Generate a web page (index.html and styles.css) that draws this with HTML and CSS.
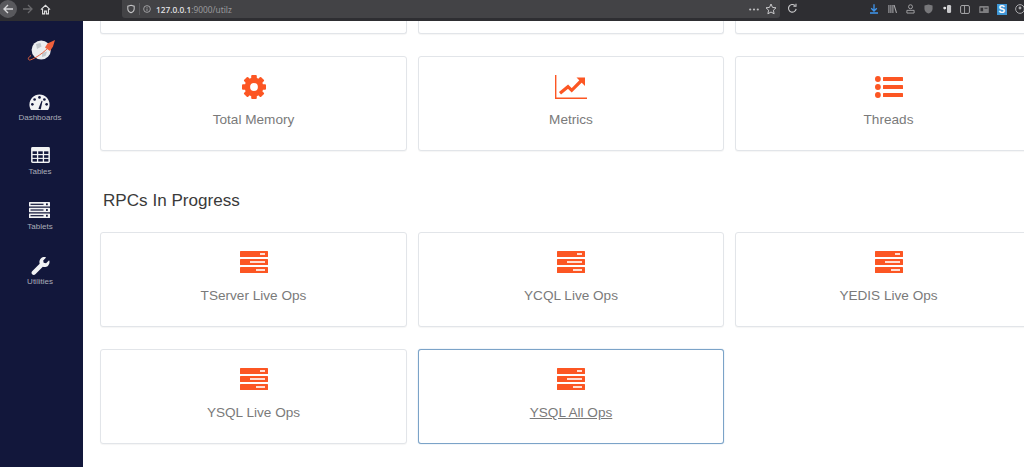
FILE: index.html
```html
<!DOCTYPE html>
<html lang="en">
<head>
    <meta charset="UTF-8">
    <meta name="viewport" content="width=device-width, initial-scale=1.0">
    <title>Utilities</title>
    <link rel="stylesheet" href="styles.css">
</head>
<body>
    <svg class="icon-defs" aria-hidden="true">
        <symbol id="i-server" viewBox="0 0 28 24">
            <rect y="0" width="28" height="6" rx="0.5" fill="currentColor"/>
            <rect y="8" width="28" height="6" rx="0.5" fill="currentColor"/>
            <rect y="16" width="28" height="6" rx="0.5" fill="currentColor"/>
            <rect x="20" y="2.2" width="5" height="1.6" fill="#fff"/>
            <rect x="10" y="10.2" width="15" height="1.6" fill="#fff"/>
            <rect x="16" y="18.2" width="9" height="1.6" fill="#fff"/>
        </symbol>
        <symbol id="i-gear" viewBox="0 0 24 24">
            <g fill="currentColor">
                <rect x="9.2" y="0" width="5.6" height="24" rx="1"/>
                <rect x="9.2" y="0" width="5.6" height="24" rx="1" transform="rotate(45 12 12)"/>
                <rect x="9.2" y="0" width="5.6" height="24" rx="1" transform="rotate(90 12 12)"/>
                <rect x="9.2" y="0" width="5.6" height="24" rx="1" transform="rotate(135 12 12)"/>
                <circle cx="12" cy="12" r="9.4"/>
            </g>
            <circle cx="12" cy="12" r="3.9" fill="#fff"/>
        </symbol>
        <symbol id="i-chart" viewBox="0 0 32 24">
            <path d="M0.7 0V23.3H32" fill="none" stroke="currentColor" stroke-width="1.4"/>
            <path d="M5 18.3L13 11.7L16.7 15.3L26 6" fill="none" stroke="currentColor" stroke-width="3.2"/>
            <path d="M21.5 2.5H30V11Z" fill="currentColor"/>
        </symbol>
        <symbol id="i-list" viewBox="0 0 28 24">
            <g fill="currentColor">
                <circle cx="2.9" cy="4" r="2.9"/>
                <circle cx="2.9" cy="12" r="2.9"/>
                <circle cx="2.9" cy="20" r="2.9"/>
                <rect x="8" y="2" width="20" height="4" rx="0.5"/>
                <rect x="8" y="10" width="20" height="4" rx="0.5"/>
                <rect x="8" y="18" width="20" height="4" rx="0.5"/>
            </g>
        </symbol>
    </svg>

    <div class="toolbar">
        <div class="nav-btns">
            <span class="back-btn">
                <svg width="12" height="12" viewBox="0 0 12 12"><path d="M11 6H2M6 2L2 6L6 10" fill="none" stroke="#d8d8da" stroke-width="1.4"/></svg>
            </span>
            <svg class="fwd-btn" width="12" height="12" viewBox="0 0 12 12"><path d="M1 6H10M6 2L10 6L6 10" fill="none" stroke="#69696c" stroke-width="1.3"/></svg>
            <svg class="home-btn" width="11" height="11" viewBox="0 0 12 12"><path d="M1 6.2L6 1.5L11 6.2M2.8 5.5V10.8H5V7.8H7V10.8H9.2V5.5" fill="none" stroke="#e0e0e2" stroke-width="1.2"/></svg>
        </div>
        <div class="urlbar">
            <svg width="8" height="10" viewBox="0 0 10 11"><path d="M5 .8L9 2V5.5C9 8 7 9.5 5 10.3C3 9.5 1 8 1 5.5V2Z" fill="none" stroke="#c4c4c6" stroke-width="1.3"/></svg>
            <span class="url-sep"></span>
            <svg width="8" height="8" viewBox="0 0 10 10"><circle cx="5" cy="5" r="4.2" fill="none" stroke="#b5b5b7"/><path d="M5 4.4V7.4M5 2.5V3.5" stroke="#b5b5b7"/></svg>
            <span class="url-text"><b>127.0.0.1</b>:9000/utilz</span>
            <svg class="url-dots" width="10" height="3" viewBox="0 0 10 3"><circle cx="1.2" cy="1.5" r="1.1" fill="#bdbdbf"/><circle cx="5" cy="1.5" r="1.1" fill="#bdbdbf"/><circle cx="8.8" cy="1.5" r="1.1" fill="#bdbdbf"/></svg>
            <svg width="12" height="12" viewBox="0 0 12 12"><path d="M6 1L7.5 4.4L11 4.8L8.4 7.2L9.1 10.8L6 9L2.9 10.8L3.6 7.2L1 4.8L4.5 4.4Z" fill="none" stroke="#c9c9cb"/></svg>
        </div>
        <svg class="reload-btn" width="11" height="11" viewBox="0 0 12 12"><path d="M10 6.5A4.2 4.2 0 1 1 8.6 2.6M9.8 .8V3.6H7" fill="none" stroke="#c9c9cb" stroke-width="1.2"/></svg>
        <div class="tool-icons">
            <svg width="8" height="10" viewBox="0 0 10 12"><path d="M5 0V8M1.5 5L5 8.5L8.5 5M0 11H10" fill="none" stroke="#3f96ee" stroke-width="1.6"/></svg>
            <svg width="9" height="8" viewBox="0 0 11 10"><path d="M1 0V10M3.5 0V10M6 0V10M7.5 0L10.5 10" fill="none" stroke="#a9a9ac" stroke-width="1.3"/></svg>
            <svg width="9" height="10" viewBox="0 0 10 11"><circle cx="5" cy="3" r="2.2" fill="none" stroke="#a9a9ac"/><path d="M1 7H9V10H1Z" fill="none" stroke="#a9a9ac"/></svg>
            <svg width="9" height="10" viewBox="0 0 10 11"><path d="M5 .5L9.5 1.5V5.5C9.5 8 7 10 5 10.5C3 10 .5 8 .5 5.5V1.5Z" fill="#77777a"/></svg>
            <svg width="10" height="10" viewBox="0 0 11 11"><rect x="5.5" y="1" width="4.5" height="9" rx="1.5" fill="#c9c9cb"/><circle cx="3" cy="4.5" r="1.6" fill="#e3e3e5"/></svg>
            <svg width="10" height="9" viewBox="0 0 11 10"><rect x=".6" y=".6" width="9.8" height="8.8" rx="1.5" fill="none" stroke="#a9a9ac" stroke-width="1.1"/><path d="M5 .6V9.4" stroke="#a9a9ac"/></svg>
            <svg width="10" height="7" viewBox="0 0 11 8"><rect width="11" height="8" rx="1" fill="#7f7f82"/><rect x="1.5" y="2" width="3" height="4" fill="#2f2f33"/><rect x="6" y="2" width="3.5" height="1" fill="#2f2f33"/></svg>
            <span class="ext-s">S</span>
            <svg width="10" height="10" viewBox="0 0 11 11"><circle cx="5.5" cy="5.5" r="4.8" fill="none" stroke="#a9a9ac" stroke-width="1.1"/><circle cx="5.5" cy="4.4" r="1.6" fill="#a9a9ac"/></svg>
        </div>
    </div>

    <div class="app">
        <nav class="sidebar">
            <a class="logo" href="#">
                <svg width="30" height="26" viewBox="0 0 30 26">
                    <circle cx="16.2" cy="13" r="9.6" fill="#eceef0"/>
                    <path d="M11 7L15.5 6L16.5 9.5L12 12ZM17 16L22 14.5L20.5 19L17 20Z" fill="#c3c8cc"/>
                    <path d="M23 11C16 18 7 23 4.5 23C2.5 22.5 3 20.5 6 18.5" fill="none" stroke="#e8623f" stroke-width="1"/>
                    <path d="M20 10.5L22.5 6.5L30 3L28 9.5L25 14Z" fill="#f0603c"/>
                </svg>
            </a>
            <a class="side-item" href="#">
                <svg width="21" height="16" viewBox="0 0 22 17">
                    <path d="M11 0.5C5 0.5 0.3 5.3 0.3 11.3C0.3 13.4 1 15.4 2 17H20C21 15.4 21.7 13.4 21.7 11.3C21.7 5.3 17 0.5 11 0.5Z" fill="#f1f2f4"/>
                    <g fill="#12173b">
                        <circle cx="11" cy="3.6" r="1.4"/>
                        <circle cx="5.8" cy="5.8" r="1.4"/>
                        <circle cx="16.2" cy="5.8" r="1.4"/>
                        <circle cx="3.4" cy="11" r="1.4"/>
                        <circle cx="18.6" cy="11" r="1.4"/>
                        <path d="M9.8 15.8L13.2 7.2L14.2 7.5L12.3 16.4Z"/>
                    </g>
                </svg>
                <span>Dashboards</span>
            </a>
            <a class="side-item" href="#">
                <svg class="icon-up" width="19" height="16" viewBox="0 0 20 17">
                    <rect width="20" height="17" rx="1.5" fill="#f1f2f4"/>
                    <g fill="#12173b">
                        <rect x="1.6" y="4.6" width="4.6" height="2.8"/><rect x="7.6" y="4.6" width="4.8" height="2.8"/><rect x="13.8" y="4.6" width="4.6" height="2.8"/>
                        <rect x="1.6" y="8.7" width="4.6" height="2.8"/><rect x="7.6" y="8.7" width="4.8" height="2.8"/><rect x="13.8" y="8.7" width="4.6" height="2.8"/>
                        <rect x="1.6" y="12.7" width="4.6" height="2.8"/><rect x="7.6" y="12.7" width="4.8" height="2.8"/><rect x="13.8" y="12.7" width="4.6" height="2.8"/>
                    </g>
                </svg>
                <span>Tables</span>
            </a>
            <a class="side-item" href="#">
                <svg class="icon-up" width="21" height="16" viewBox="0 0 21 16">
                    <g fill="#f1f2f4">
                        <rect width="21" height="4.6" rx="0.5"/>
                        <rect y="5.7" width="21" height="4.6" rx="0.5"/>
                        <rect y="11.4" width="21" height="4.6" rx="0.5"/>
                    </g>
                    <g fill="#12173b">
                        <rect x="1.5" y="1.7" width="13" height="1.2"/><rect x="17" y="1.4" width="1.8" height="1.8"/>
                        <rect x="1.5" y="7.4" width="13" height="1.2"/><rect x="17" y="7.1" width="1.8" height="1.8"/>
                        <rect x="1.5" y="13.1" width="13" height="1.2"/><rect x="17" y="12.8" width="1.8" height="1.8"/>
                    </g>
                </svg>
                <span>Tablets</span>
            </a>
            <a class="side-item" href="#">
                <svg class="icon-up" width="19" height="18" viewBox="0 0 512 512">
                    <path fill="#f1f2f4" d="M507.73 109.1c-2.24-9.03-13.54-12.09-20.12-5.51l-74.36 74.36-67.88-11.31-11.31-67.88 74.36-74.36c6.62-6.62 3.43-17.9-5.66-20.16-47.38-11.74-99.55.91-136.58 37.93-39.64 39.64-50.55 97.1-34.05 147.2L18.74 402.76c-24.99 24.99-24.99 65.51 0 90.5 24.99 24.99 65.51 24.99 90.5 0l213.21-213.21c50.12 16.71 107.47 5.68 147.37-34.22 37.07-37.07 49.7-89.32 37.91-136.73z"/>
                </svg>
                <span>Utilities</span>
            </a>
        </nav>

        <main class="content">
            <div class="card-grid card-grid-top">
                <div class="card-stub"></div>
                <div class="card-stub"></div>
                <div class="card-stub"></div>
            </div>

            <div class="card-grid">
                <a class="card" href="#"><svg class="card-icon" width="24" height="24"><use href="#i-gear"/></svg><span>Total Memory</span></a>
                <a class="card" href="#"><svg class="card-icon" width="32" height="24"><use href="#i-chart"/></svg><span>Metrics</span></a>
                <a class="card" href="#"><svg class="card-icon" width="28" height="24"><use href="#i-list"/></svg><span>Threads</span></a>
            </div>

            <h2 class="section-title">RPCs In Progress</h2>

            <div class="card-grid card-grid-rows">
                <a class="card" href="#"><svg class="card-icon" width="28" height="24"><use href="#i-server"/></svg><span>TServer Live Ops</span></a>
                <a class="card" href="#"><svg class="card-icon" width="28" height="24"><use href="#i-server"/></svg><span>YCQL Live Ops</span></a>
                <a class="card" href="#"><svg class="card-icon" width="28" height="24"><use href="#i-server"/></svg><span>YEDIS Live Ops</span></a>
                <a class="card" href="#"><svg class="card-icon" width="28" height="24"><use href="#i-server"/></svg><span>YSQL Live Ops</span></a>
                <a class="card card-active" href="#"><svg class="card-icon" width="28" height="24"><use href="#i-server"/></svg><span>YSQL All Ops</span></a>
            </div>
        </main>
    </div>
</body>
</html>
```

FILE: styles.css
```css
html, body {
    margin: 0;
    height: 467px;
    overflow: hidden;
    font-family: "Liberation Sans", Arial, sans-serif;
    background: #fff;
}

a {
    text-decoration: none;
}

.icon-defs {
    display: none;
}

/* browser chrome */
.toolbar {
    display: flex;
    align-items: flex-start;
    height: 21px;
    background: #2e2e32;
    box-sizing: border-box;
    overflow: hidden;
}

.nav-btns {
    display: flex;
    flex: none;
    align-items: center;
    width: 122px;
    height: 18px;
}

.back-btn {
    display: flex;
    align-items: center;
    justify-content: center;
    width: 18px;
    height: 18px;
    margin-left: -1px;
    border-radius: 50%;
    background: #59595d;
}

.fwd-btn {
    margin-left: 5px;
}

.home-btn {
    margin-left: 6px;
}

.urlbar {
    display: flex;
    flex: none;
    align-items: center;
    gap: 3.5px;
    width: 658px;
    height: 18px;
    padding: 0 3px 0 5px;
    box-sizing: border-box;
    background: #434346;
    border-radius: 0 0 3px 3px;
}

.url-sep {
    width: 1px;
    height: 12px;
    background: #5a5a5e;
}

.url-text {
    flex: 1;
    margin-left: 1.5px;
    font-family: "Noto Sans", sans-serif;
    font-size: 8.3px;
    color: #9a9a9d;
}

.url-text b {
    font-weight: 500;
    color: #e6e6e8;
}

.url-dots {
    margin-right: 3px;
}

.reload-btn {
    flex: none;
    margin: 3px 0 0 7px;
}

.tool-icons {
    display: grid;
    flex: none;
    grid-template-columns: repeat(9, 18.25px);
    justify-items: center;
    align-items: center;
    height: 18px;
    margin-left: 67px;
}

.ext-s {
    width: 10px;
    height: 11px;
    background: #3f96d6;
    color: #fff;
    font-size: 10px;
    line-height: 11px;
    font-weight: 700;
    text-align: center;
}

/* app */
.app {
    display: flex;
    height: 446px;
}

.sidebar {
    display: flex;
    flex-direction: column;
    align-items: center;
    flex: none;
    width: 83px;
    padding-right: 3px;
    box-sizing: border-box;
    background: #12173b;
}

.logo {
    display: block;
    height: 26px;
    margin-top: 16px;
    margin-bottom: 31px;
}

.logo svg {
    display: block;
}

.side-item {
    display: flex;
    flex-direction: column;
    align-items: center;
    height: 54.7px;
    color: #abadb9;
    font-size: 8px;
    line-height: 10px;
}

.side-item svg {
    display: block;
    margin-bottom: 2.5px;
}

.side-item .icon-up {
    margin-top: -1.5px;
    margin-bottom: 4px;
}

.side-item:last-child .icon-up {
    margin-top: -1px;
    margin-bottom: 1.5px;
}

.content {
    flex: none;
    width: 958px;
    padding-left: 17px;
    box-sizing: border-box;
}

.card-grid {
    display: grid;
    grid-template-columns: 307px 306px 307px;
    column-gap: 11px;
}

.card-grid-top {
    margin-bottom: 22px;
}

.card-grid-rows {
    row-gap: 22px;
}

.card-stub {
    height: 13px;
    box-sizing: border-box;
    background: #fff;
    border: 1px solid #e2e5e9;
    border-top: none;
    border-radius: 0 0 3px 3px;
    box-shadow: 0 1px 1px rgba(0, 0, 0, 0.04);
}

.card {
    display: flex;
    flex-direction: column;
    align-items: center;
    height: 95px;
    box-sizing: border-box;
    padding-top: 18px;
    background: #fff;
    border: 1px solid #e2e5e9;
    border-radius: 3px;
    box-shadow: 0 1px 1px rgba(0, 0, 0, 0.04);
    color: #7a7a7a;
    font-size: 13.6px;
    line-height: 16px;
}

.card-icon {
    display: block;
    height: 24px;
    margin-bottom: 13px;
    color: #fc5623;
}

.card-active {
    border-color: #7ba3c8;
    box-shadow: 0 0 1px #7ba3c8;
    text-decoration: underline;
}

.section-title {
    margin: 40px 0 21px 3px;
    color: #3a3a3a;
    font-size: 17.1px;
    line-height: 20px;
    font-weight: 400;
}
```
